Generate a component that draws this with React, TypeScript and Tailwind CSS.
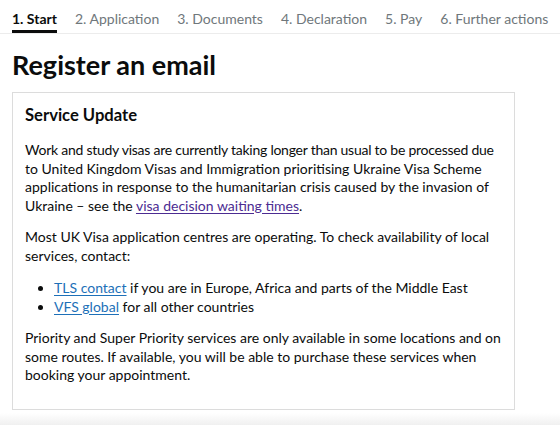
import React from "react";

export default function App() {
  const tabs = ["2. Application", "3. Documents", "4. Declaration", "5. Pay", "6. Further actions"];
  return (
    <div className="w-[560px] h-[425px] bg-white overflow-hidden text-[#0b0c0c] relative" style={{ fontFamily: 'Lato, Arial, sans-serif' }}>
      <div className="border-b border-[#ececec] flex items-end pl-3 gap-[18px] h-[34px] whitespace-nowrap">
        <div className="border-b-[3px] border-[#0b0c0c] pb-[1px] text-[14px] font-bold leading-[20px]">1. Start</div>
        {tabs.map((t) => (
          <div key={t} className="pb-[4px] text-[14px] leading-[20px] text-[#6f777b]">{t}</div>
        ))}
      </div>
      <h1 className="pl-3 mt-[14px] text-[27px] font-bold leading-[34px]">Register an email</h1>
      <div className="ml-3 mt-[10px] w-[503px] h-[318px] border border-[#dcdcdc] pl-3 pr-[6px] pt-[10px] whitespace-nowrap">
        <h2 className="text-[16.6px] font-bold leading-[24px]">Service Update</h2>
        <p className="mt-[14px] text-[14px] leading-[18.5px]">
          <span className="tracking-[-0.25px]">Work and study visas are currently taking longer than usual to be processed due</span><br />
          to United Kingdom Visas and Immigration prioritising Ukraine Visa Scheme<br />
          applications in response to the humanitarian crisis caused by the invasion of<br />
          Ukraine – see the{" "}
          <a className="text-[#4c2c92] underline underline-offset-2">visa decision waiting times</a>.
        </p>
        <p className="mt-[13px] text-[14px] leading-[18.5px]">
          Most UK Visa application centres are operating. To check availability of local<br />
          services, contact:
        </p>
        <ul className="mt-[14px] ml-[17px] list-disc pl-[12px] text-[14px] leading-[18.5px]">
          <li><a className="text-[#1d70b8] underline underline-offset-2">TLS contact</a> if you are in Europe, Africa and parts of the Middle East</li>
          <li><a className="text-[#1d70b8] underline underline-offset-2">VFS global</a> for all other countries</li>
        </ul>
        <p className="mt-[13px] text-[14px] leading-[18.5px]">
          Priority and Super Priority services are only available in some locations and on<br />
          some routes. If available, you will be able to purchase these services when<br />
          booking your appointment.
        </p>
      </div>
      <div className="absolute left-0 right-0 bottom-0 h-[12px] bg-gradient-to-b from-white to-[#f0f0f0]" />
    </div>
  );
}
